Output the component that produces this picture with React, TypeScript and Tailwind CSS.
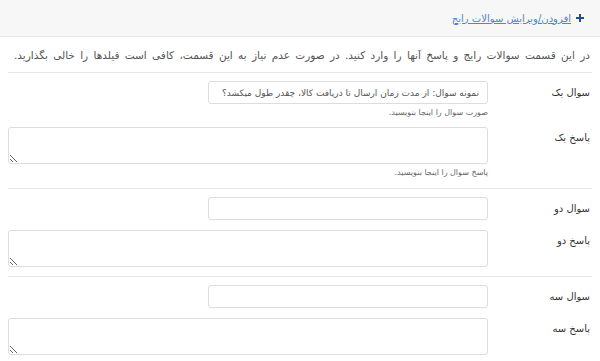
const ROWS = [
  { q: 'سوال یک', a: 'پاسخ یک', placeholder: 'نمونه سوال: از مدت زمان ارسال تا دریافت کالا، چقدر طول میکشد؟', help: true },
  { q: 'سوال دو', a: 'پاسخ دو', placeholder: '', help: false },
  { q: 'سوال سه', a: 'پاسخ سه', placeholder: '', help: false },
]

function PlusIcon() {
  return (
    <svg width="8" height="8" viewBox="0 0 8 8" className="shrink-0">
      <path d="M3 0h2v3h3v2H5v3H3V5H0V3h3z" fill="#1d4f91" />
    </svg>
  )
}

export default function App() {
  return (
    <div dir="rtl" className="w-[600px] h-[361px] overflow-hidden bg-white font-['DejaVu_Sans',sans-serif] text-[#333]">
      <div className="h-[37px] bg-[#f7f7f7] border-b border-[#e6e6e6] flex items-center px-[16px]">
        <a href="#" className="flex items-center gap-[5px] text-[10px] text-[#4a86d8] underline">
          <PlusIcon />
          <span>افزودن/ویرایش سوالات رایج</span>
        </a>
      </div>

      <div className="px-[8px]">
        <p className="text-[10.5px] [word-spacing:2px] text-[#555] pr-[2px] pt-[11px] pb-[9px] leading-[15px] border-b border-[#e8e8e8] whitespace-nowrap">
          در این قسمت سوالات رایج و پاسخ آنها را وارد کنید. در صورت عدم نیاز به این قسمت، کافی است فیلدها را خالی بگذارید.
        </p>

        {ROWS.map(row => (
          <div key={row.q} className="border-b border-[#e8e8e8] pt-[8px] pb-[9px]">
            <div className="flex">
              <label className="w-[104px] shrink-0 pr-[2px] text-[10px] leading-[23px]">{row.q}</label>
              <div className="flex-1">
                <input
                  type="text"
                  placeholder={row.placeholder}
                  className="block w-[280px] h-[23px] px-[8px] border border-[#ddd] rounded-[3px] text-[9px] placeholder:text-[#555] outline-none"
                />
                {row.help && (
                  <p className="text-[8px] text-[#666] mt-[3px] leading-[12px]">صورت سوال را اینجا بنویسید.</p>
                )}
              </div>
            </div>

            <div className={`flex ${row.help ? 'mt-[8px]' : 'mt-[10px]'}`}>
              <label className="w-[104px] shrink-0 pr-[2px] text-[10px] pt-[5px] leading-[12px]">{row.a}</label>
              <div className="flex-1">
                <textarea className="block w-full h-[37px] border border-[#ddd] rounded-[3px] outline-none" />
                {row.help && (
                  <p className="text-[8px] text-[#666] mt-[3px] leading-[12px]">پاسخ سوال را اینجا بنویسید.</p>
                )}
              </div>
            </div>
          </div>
        ))}
      </div>
    </div>
  )
}
